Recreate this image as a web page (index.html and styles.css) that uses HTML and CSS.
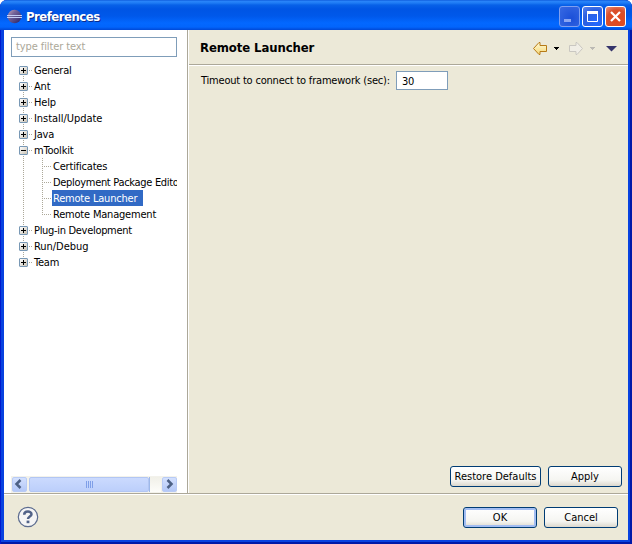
FILE: index.html
```html
<!DOCTYPE html>
<html lang="en">
<head>
<meta charset="utf-8">
<title>Preferences</title>
<link rel="stylesheet" href="styles.css">
</head>
<body>
<div class="window">
  <header class="titlebar">
    <svg class="logo" width="15" height="15" viewBox="0 0 15 15">
      <defs><linearGradient id="orb" x1="0" y1="0" x2="1" y2="1"><stop offset="0" stop-color="#c9a8b8"/><stop offset=".35" stop-color="#75649a"/><stop offset="1" stop-color="#252064"/></linearGradient></defs>
      <circle cx="7.500" cy="7.500" r="6.800" fill="url(#orb)"/>
      <path d="M0 6.500h15M0 8.500h15" stroke="#c3cdf4"/>
    </svg>
    <h1>Preferences</h1>
    <div class="controls">
      <span class="ctl min"><svg width="19" height="19"><rect x="4" y="12" width="7" height="3" fill="#8ba6f2"/></svg></span>
      <span class="ctl max"><svg width="19" height="19"><path d="M4.500 5h10v9.500h-10z" fill="none" stroke="#fff"/><path d="M4 5.500h11" stroke="#fff" stroke-width="3"/></svg></span>
      <span class="ctl close"><svg width="19" height="19"><path d="M5 5l9 9M14 5l-9 9" stroke="#fff" stroke-width="2.200"/></svg></span>
    </div>
  </header>
  <main class="body">
    <aside class="side">
      <div class="filter">type filter text</div>
      <ul class="tree">
        <li><i class="box plus"></i><span>General</span></li>
        <li><i class="box plus"></i><span>Ant</span></li>
        <li><i class="box plus"></i><span>Help</span></li>
        <li><i class="box plus"></i><span class="loose">Install/Update</span></li>
        <li><i class="box plus"></i><span>Java</span></li>
        <li><i class="box"></i><span>mToolkit</span></li>
        <li class="child"><span>Certificates</span></li>
        <li class="child"><span class="tight">Deployment Package Editor</span></li>
        <li class="child selected"><span>Remote Launcher</span></li>
        <li class="child last"><span>Remote Management</span></li>
        <li><i class="box plus"></i><span class="tight">Plug-in Development</span></li>
        <li><i class="box plus"></i><span class="loose">Run/Debug</span></li>
        <li><i class="box plus"></i><span>Team</span></li>
      </ul>
      <div class="scroll">
        <span class="sbtn"><svg width="14" height="14"><path d="M8.500 3l-4 4 4 4" fill="none" stroke="#4d6185" stroke-width="2.500"/></svg></span>
        <span class="thumb"><i></i><i></i><i></i><i></i></span>
        <span class="track"></span>
        <span class="sbtn"><svg width="14" height="14"><path d="M5.500 3l4 4-4 4" fill="none" stroke="#4d6185" stroke-width="2.500"/></svg></span>
      </div>
    </aside>
    <section class="page">
      <div class="page-head">
        <h2>Remote Launcher</h2>
        <svg class="nav" width="86" height="16" viewBox="0 0 86 16">
          <defs><linearGradient id="gold" x1="0" y1="0" x2="0" y2="1"><stop offset="0" stop-color="#fffbd8"/><stop offset="1" stop-color="#f5d776"/></linearGradient></defs>
          <path d="M1.500 8.500l5.500-6h1v3h6.500v6h-6.500v3h-1z" fill="url(#gold)" stroke="#b67a17"/>
          <path d="M22 7h5v1h-1v1h-1v1h-1v-1h-1v-1h-1z" fill="#000"/>
          <path d="M50.500 8.500l-5.500-6h-1v3h-6.500v6h6.500v3h1z" fill="#f0eee6" stroke="#c9c7c1"/>
          <path d="M58 7h5v1h-1v1h-1v1h-1v-1h-1v-1h-1z" fill="#bcbab4"/>
          <path d="M74 6h11l-5.500 5.500z" fill="#35346b"/>
        </svg>
      </div>
      <div class="form"><label>Timeout to connect to framework (sec):</label><div class="num">30</div></div>
      <div class="actions"><button class="wide"><span>Restore Defaults</span></button><button><span>Apply</span></button></div>
    </section>
  </main>
  <footer class="foot">
    <svg class="help" width="22" height="22" viewBox="0 0 22 22">
      <circle cx="11" cy="11" r="9.700" fill="#f5f5f5" stroke="#5c6c8f" stroke-width="1.200"/>
      <path d="M7.200 8.800C7.200 4.500 14.500 4.600 14.500 8.300C14.500 10.500 11 10.600 11 13" fill="none" stroke="#526388" stroke-width="2.500"/>
      <rect x="9.600" y="14.600" width="2.800" height="2.600" fill="#526388"/>
    </svg>
    <div class="foot-buttons"><button class="default"><span>OK</span></button><button><span>Cancel</span></button></div>
  </footer>
</div>
</body>
</html>
```
FILE: styles.css
```css
* { box-sizing: border-box; }
body { margin: 0; background: #fff; font: 11px/16px "DejaVu Sans Condensed", "DejaVu Sans", sans-serif; font-stretch: condensed; color: #000; }
h1, h2, ul { margin: 0; padding: 0; }
svg { display: block; }
.window { width: 632px; height: 544px; display: flex; flex-direction: column; background: #0842e0; border-radius: 7px 7px 0 0; overflow: hidden; box-shadow: inset 1px 0 #0019cf, inset -2px 0 #0019a8, inset 0 -2px #0019a8; }
.titlebar { height: 30px; flex: none; display: flex; align-items: center; padding: 2px 6px 0 7px; background: linear-gradient(#0750d4 0, #2b86fa 1px, #1e7bf4 3px, #0861e8 5px, #0055e4 9px, #0058ea 16px, #0368ff 23px, #0265fc 27px, #0048d6 30px); }
h1 { font: bold 13px/16px "DejaVu Sans Condensed", sans-serif; font-stretch: condensed; letter-spacing: -.5px; color: #fff; margin-left: 4px; padding-top: 1px; text-shadow: 1px 1px #0b2a8a; white-space: nowrap; }
.controls { margin-left: auto; display: flex; gap: 2px; }
.ctl { width: 21px; height: 21px; border: 1px solid #fff; border-radius: 3px; background: radial-gradient(circle at 70% 80%, #2268ff, #2b5fe0 60%, #5d86ee); }
.ctl.min { border-color: #7f9ff0; background: radial-gradient(circle at 60% 60%, #1b4fd8, #3567e2 90%); }
.ctl.close { background: radial-gradient(circle at 60% 70%, #e4481c, #d9502c 60%, #ec9480); }
.body { height: 463px; margin: 0 4px; display: flex; }
.side { width: 184px; background: #fff; padding: 7px 10px 0 7px; border-right: 1px solid #aca899; display: flex; flex-direction: column; }
.filter { height: 20px; border: 1px solid #7f9db9; color: #aca899; padding: 1px 3px 0 4px; letter-spacing: -.1px; }
.tree { list-style: none; margin-top: 5px; width: 166px; overflow: hidden; letter-spacing: -.2px; }
.tree li { height: 16px; display: flex; align-items: center; padding-left: 8px; white-space: nowrap; background: repeating-linear-gradient(#aca899 0 1px, #fff 1px 2px) 12px 0 / 1px 16px no-repeat; }
.tree li:first-child { background-position: 12px 8px; }
.tree li:last-child { background-size: 1px 8px; }
.tree .tight { letter-spacing: -.31px; }
.tree .loose { letter-spacing: -.05px; }
.box { width: 9px; height: 9px; flex: none; border: 1px solid #7898b5; border-radius: 1px; background: linear-gradient(#000, #000) 1px 3px / 5px 1px no-repeat, linear-gradient(135deg, #fff, #c9c2b4); }
.box.plus { background: linear-gradient(#000, #000) 1px 3px / 5px 1px no-repeat, linear-gradient(#000, #000) 3px 1px / 1px 5px no-repeat, linear-gradient(135deg, #fff, #c9c2b4); }
.tree span { height: 16px; line-height: 17px; }
.box + span { padding-left: 6px; background: repeating-linear-gradient(90deg, #fff 0 1px, #aca899 1px 2px) 0 8px / 4px 1px no-repeat; }
.tree .child { padding-left: 41px; background: repeating-linear-gradient(#aca899 0 1px, #fff 1px 2px) 12px 0 / 1px 16px no-repeat, repeating-linear-gradient(#aca899 0 1px, #fff 1px 2px) 31px 0 / 1px 16px no-repeat, repeating-linear-gradient(90deg, #aca899 0 1px, #fff 1px 2px) 31px 8px / 9px 1px no-repeat; }
.tree .child.last { background-size: 1px 16px, 1px 8px, 9px 1px; }
.child span { padding-left: 1px; }
.selected span { background: #316ac5; color: #fff; width: 91px; }
.scroll { display: flex; height: 17px; margin-top: auto; width: 166px; padding: 1px 0; background: #f3f2eb; }
.sbtn { width: 15px; height: 15px; flex: none; background: linear-gradient(#d3e0fe, #b4c8f7); border-radius: 2px; border: 1px solid #b8cbf6; margin-left: 1px; }
.sbtn svg { margin: -1px 0 0 -1px; }
.thumb { width: 120px; height: 15px; margin-left: 2px; background: linear-gradient(#cbdafe, #bccffb); border: 1px solid #b2c6f3; border-radius: 2px; display: flex; justify-content: center; align-items: center; gap: 1px; }
.thumb i { width: 1px; height: 7px; background: #7f9fe8; }
.track { flex: 1; background: linear-gradient(#f1f0e8, #fdfdfa); border-left: 1px solid #9eb8e9; }
.page { flex: 1; background: #ece9d8; border-left: 1px solid #fff; display: flex; flex-direction: column; }
.page-head { height: 36px; border-bottom: 1px solid #fff; box-shadow: inset 0 -1px #aca899; display: flex; align-items: center; justify-content: space-between; padding: 0 10px 0 11px; }
h2 { font: bold 13px/16px "DejaVu Sans Condensed", sans-serif; font-stretch: condensed; letter-spacing: -.1px; padding-top: 1px; }
.form { display: flex; align-items: center; margin: 5px 0 0 12px; height: 19px; white-space: nowrap; }
label { width: 195px; padding-top: 1px; letter-spacing: -.2px; }
.num { width: 52px; height: 19px; background: #fff; border: 1px solid #7f9db9; padding: 2px 5px 0; line-height: 15px; letter-spacing: -.3px; }
.actions { display: flex; gap: 7px; justify-content: flex-end; margin: auto 6px 6px 0; }
button { width: 74px; height: 21px; padding: 0; border: 1px solid #003c74; border-radius: 3px; background: linear-gradient(#fff, #f5f5f1 70%, #dcd8cd); font: inherit; color: #000; white-space: nowrap; }
button.wide { width: 91px; }
button.default { box-shadow: inset 0 0 0 2px #a2bdf2; }
.foot { height: 47px; margin: 0 4px; background: #ece9d8; border-top: 1px solid #aca899; box-shadow: inset 0 1px #fff; display: flex; justify-content: space-between; padding: 12px 10px 0 13px; }
.foot-buttons { display: flex; gap: 7px; margin-top: 1px; }
```
